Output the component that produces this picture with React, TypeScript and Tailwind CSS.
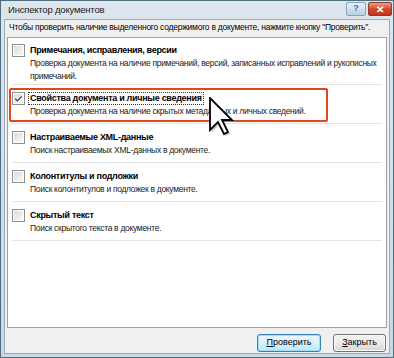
import { Check } from "lucide-react";

const items = [
  {
    title: "Примечания, исправления, версии",
    desc: ["Проверка документа на наличие примечаний, версий, записанных исправлений и рукописных", "примечаний."],
    checked: false,
    pad: "pt-[6px] pb-[1px]",
  },
  {
    title: "Свойства документа и личные сведения",
    desc: ["Проверка документа на наличие скрытых метаданных и личных сведений."],
    checked: true,
    pad: "pt-[7px] pb-[5px]",
  },
  {
    title: "Настраиваемые XML-данные",
    desc: ["Поиск настраиваемых XML-данных в документе."],
    checked: false,
    pad: "pt-[7px] pb-[5px]",
  },
  {
    title: "Колонтитулы и подложки",
    desc: ["Поиск колонтитулов и подложек в документе."],
    checked: false,
    pad: "pt-[7px] pb-[5px]",
  },
  {
    title: "Скрытый текст",
    desc: ["Поиск скрытого текста в документе."],
    checked: false,
    pad: "pt-[7px] pb-[5px]",
  },
];

function Checkbox({ checked }: { checked: boolean }) {
  return (
    <div className="w-[13px] h-[13px] shrink-0 border border-[#8e8f8f] bg-white p-[1px]">
      <div className="w-full h-full bg-gradient-to-br from-[#dcdcdc] to-[#f8f8f8] flex items-center justify-center">
        {checked && <Check className="w-[10px] h-[10px] text-[#1c3f78]" strokeWidth={3} />}
      </div>
    </div>
  );
}

function Cursor() {
  // classic windows arrow, scaled
  return (
    <svg width="26" height="40" viewBox="0 0 13 20" className="absolute left-[208px] top-[96px]">
      <polygon points="1.5,1.5 1.5,17.5 5.5,13.5 8.5,19.5 10.5,18.5 7.5,12.5 12.5,12.5" fill="#9a9a9a" opacity="0.5" />
      <polygon points="0.5,0.5 0.5,16.5 4.5,12.5 7.5,18.5 9.5,17.5 6.5,11.5 11.5,11.5" fill="#fff" stroke="#000" strokeWidth="0.9" strokeLinejoin="miter" />
    </svg>
  );
}

export default function App() {
  return (
    <div
      className="relative w-[394px] h-[358px] bg-gradient-to-b from-[#dde6ef] to-[#c9d7e6] border border-[#4f6f7d] flex flex-col text-[#000] overflow-hidden"
      style={{ fontFamily: '"Liberation Sans", Arial, sans-serif' }}
    >
      {/* title bar */}
      <div className="h-[18px] flex items-center pl-[7px] pr-[1px] shrink-0">
        <span className="text-[9.5px] tracking-[-0.2px] text-[#1a1a1a]">Инспектор документов</span>
        <div className="ml-auto flex items-center gap-[2px] mt-[-2px]">
          <div className="w-[20px] h-[14px] rounded-[2px] border border-[#8aa3bf] bg-gradient-to-b from-[#e7f0f9] to-[#bcd0e6] flex items-center justify-center text-[9px] font-bold text-[#4a6fa0]">
            ?
          </div>
          <div className="w-[24px] h-[14px] rounded-[2px] border border-[#8f3a2c] bg-gradient-to-b from-[#e8a08c] via-[#d2482c] to-[#c0361c] flex items-center justify-center text-[10px] font-bold text-white">
            ✕
          </div>
        </div>
      </div>

      {/* client area */}
      <div className="flex-1 mx-[3px] mb-[3px] bg-[#f0f0f0] border border-[#9eaab6] flex flex-col px-[2px]">
        <div className="text-[8.5px] leading-[13px] pl-[2px] pt-[1px] tracking-[-0.25px] whitespace-nowrap">
          Чтобы проверить наличие выделенного содержимого в документе, нажмите кнопку "Проверить".
        </div>

        <div className="mt-[3px] h-[291px] bg-white border border-[#a0a0a0] flex flex-col shrink-0">
          {items.map((it, i) => (
            <div key={i} className={"mx-[4px] border-b border-[#e4e4e4] flex flex-col " + it.pad}>
              <div className="flex items-center gap-[4px] h-[13px]">
                <Checkbox checked={it.checked} />
                <span
                  className={
                    "text-[9px] font-bold leading-[11px] tracking-[-0.3px] px-[1px] " +
                    (it.checked ? "outline outline-1 outline-dotted outline-[#333]" : "")
                  }
                >
                  {it.title}
                </span>
              </div>
              {it.desc.map((line, j) => (
                <div key={j} className="pl-[18px] text-[8.5px] leading-[13px] tracking-[-0.3px] text-[#222] whitespace-nowrap">
                  {line}
                </div>
              ))}
            </div>
          ))}
        </div>

        <div className="flex-1 flex items-center justify-end gap-[12px] pr-[1px] pt-[4px]">
          <button className="w-[64px] h-[18px] rounded-[3px] border border-[#3c7fb1] bg-gradient-to-b from-[#eaf6fd] via-[#d9f0fc] to-[#bee6fd] shadow-[inset_0_0_0_1px_#9edcf8] text-[9px] leading-none">
            <span className="underline">П</span>роверить
          </button>
          <button className="w-[53px] h-[18px] rounded-[3px] border border-[#707070] bg-gradient-to-b from-[#f2f2f2] via-[#ebebeb] to-[#d6d6d6] shadow-[inset_0_0_0_1px_#fcfcfc] text-[9px] leading-none">
            <span className="underline">З</span>акрыть
          </button>
        </div>
      </div>

      {/* annotation highlight */}
      <div className="absolute left-[8px] top-[87px] w-[319px] h-[34px] border-2 border-[#e2461e] rounded-[2px]" />
      <Cursor />
    </div>
  );
}
